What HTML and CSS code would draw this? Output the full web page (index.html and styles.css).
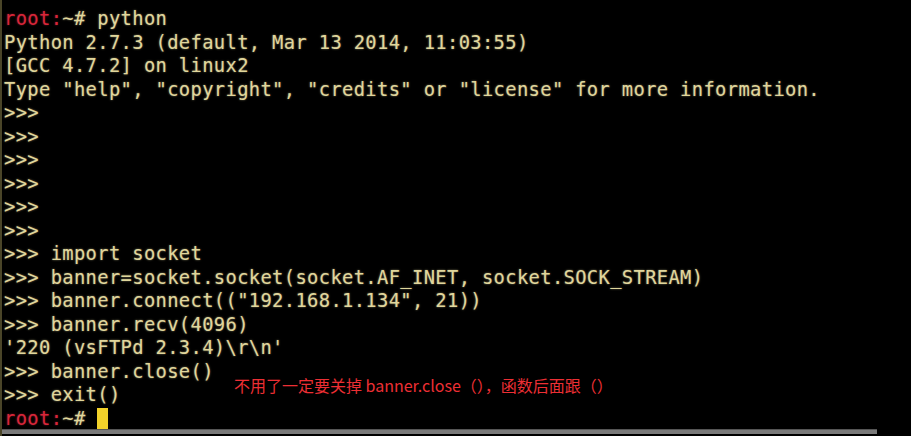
FILE: index.html
```html
<!DOCTYPE html>
<html lang="en">
<head>
    <meta charset="UTF-8">
    <meta name="viewport" content="width=device-width, initial-scale=1.0">
    <title>python socket</title>
    <link rel="stylesheet" href="styles.css">
</head>
<body>
    <div class="screen">
        <div class="terminal">
            <div class="line"><span class="prompt">root:</span>~# python</div>
            <div class="line">Python 2.7.3 (default, Mar 13 2014, 11:03:55)</div>
            <div class="line">[GCC 4.7.2] on linux2</div>
            <div class="line">Type "help", "copyright", "credits" or "license" for more information.</div>
            <div class="line">&gt;&gt;&gt;</div>
            <div class="line">&gt;&gt;&gt;</div>
            <div class="line">&gt;&gt;&gt;</div>
            <div class="line">&gt;&gt;&gt;</div>
            <div class="line">&gt;&gt;&gt;</div>
            <div class="line">&gt;&gt;&gt;</div>
            <div class="line">&gt;&gt;&gt; import socket</div>
            <div class="line">&gt;&gt;&gt; banner=socket.socket(socket.AF_INET, socket.SOCK_STREAM)</div>
            <div class="line">&gt;&gt;&gt; banner.connect(("192.168.1.134", 21))</div>
            <div class="line">&gt;&gt;&gt; banner.recv(4096)</div>
            <div class="line">'220 (vsFTPd 2.3.4)\r\n'</div>
            <div class="line">&gt;&gt;&gt; banner.close()</div>
            <div class="line">&gt;&gt;&gt; exit()</div>
            <div class="line"><span class="prompt">root:</span>~# <span class="cursor"></span></div>
        </div>
        <div class="note">不用了一定要关掉 banner.close（），函数后面跟（）</div>
        <div class="scrollbar"></div>
    </div>
</body>
</html>
```

FILE: styles.css
```css
body {
    margin: 0;
    background-color: #000;
}
.screen {
    position: relative;
    width: 911px;
    height: 436px;
    overflow: hidden;
    border-left: 2px solid #4a4528;
    box-sizing: border-box;
}
.terminal {
    padding: 7px 0 0 2px;
    font-family: "DejaVu Sans Mono", "Liberation Mono", monospace;
    font-size: 18.8px;
    letter-spacing: 0.35px;
    line-height: 23.5px;
    color: #e0d69c;
    text-shadow: 0 0 2px rgba(224, 214, 156, 0.6);
}
.line {
    height: 23.5px;
    white-space: pre;
}
.prompt {
    color: #d8263a;
    text-shadow: 0 0 2px rgba(216, 38, 58, 0.6);
}
.cursor {
    display: inline-block;
    width: 11px;
    height: 22px;
    vertical-align: -5px;
    background-color: #f2d22a;
}
.note {
    position: absolute;
    left: 232px;
    top: 374px;
    font-family: "Noto Sans CJK SC", sans-serif;
    font-size: 16px;
    line-height: 22px;
    color: #ec2f34;
}
.scrollbar {
    position: absolute;
    left: 0;
    bottom: 2px;
    width: 875px;
    height: 4px;
    background-color: #7a7a7a;
    border-top: 1px solid #555;
}
```
